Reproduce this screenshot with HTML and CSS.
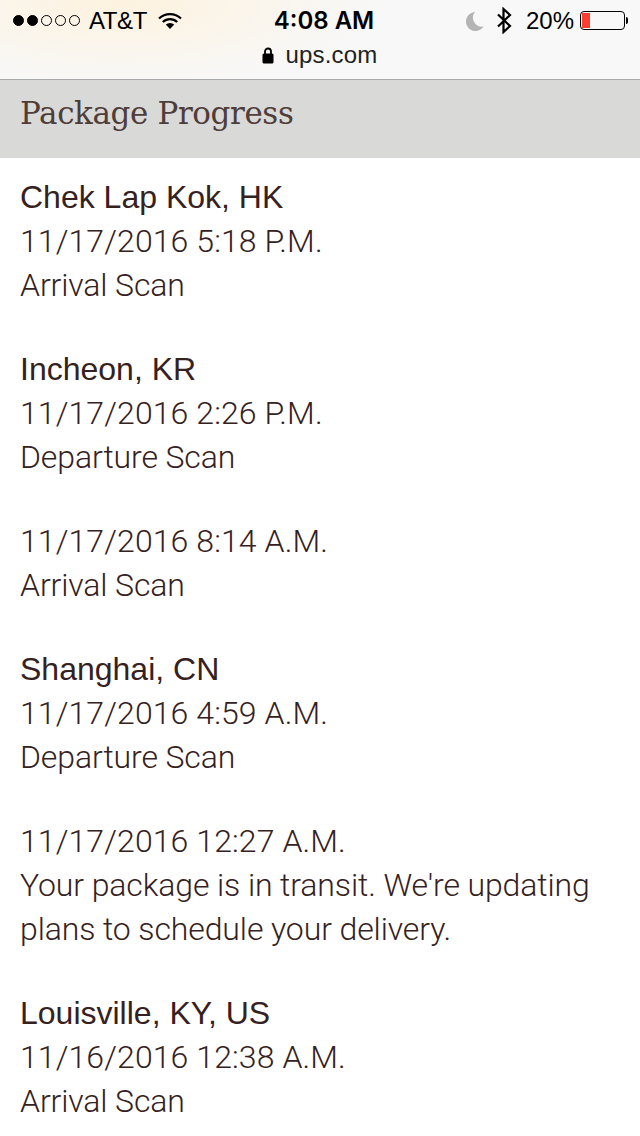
FILE: index.html
```html
<!DOCTYPE html>
<html lang="en">
<head>
    <meta charset="UTF-8">
    <meta name="viewport" content="width=device-width, initial-scale=1.0">
    <title>Package Progress</title>
    <link rel="stylesheet" href="styles.css">
</head>
<body>
<div class="browser-bar">
    <div class="status-row">
        <div class="status-left">
            <span class="signal">
                <i class="dot on"></i><i class="dot on"></i><i class="dot"></i><i class="dot"></i><i class="dot"></i>
            </span>
            <span class="carrier">AT&amp;T</span>
            <svg class="wifi" width="24" height="18" viewBox="0 0 24 18">
                <path d="M1 6.5a16 16 0 0 1 22 0" fill="none" stroke="#000" stroke-width="2.2"/>
                <path d="M4.800 10a10.500 10.500 0 0 1 14.400 0" fill="none" stroke="#000" stroke-width="2.200"/>
                <path d="M7.800 12.600a6 6 0 0 1 8.400 0L12 17z" fill="#000"/>
            </svg>
        </div>
        <div class="clock">4:08 AM</div>
        <div class="status-right">
            <svg class="moon" width="19" height="20" viewBox="0 0 19 20">
                <path d="M10 1a9.500 9.500 0 1 0 8.500 14.500A9 9 0 0 1 10 1z" fill="#b4b4b4"/>
            </svg>
            <svg class="bluetooth" width="16" height="27" viewBox="0 0 16 27">
                <path d="M2 7.500 14 19l-6.500 6V2L14 8 2 19.500" fill="none" stroke="#000" stroke-width="2.200"/>
            </svg>
            <span class="percent">20%</span>
            <span class="battery"><span class="battery-level"></span></span>
            <span class="battery-tip"></span>
        </div>
    </div>
    <div class="url-row">
        <svg class="lock" width="12" height="17" viewBox="0 0 12 17">
            <path d="M3 7V4.500a3 3 0 0 1 6 0V7" fill="none" stroke="#000" stroke-width="1.800"/>
            <rect x="0.500" y="6.500" width="11" height="10" rx="1.500" fill="#000"/>
        </svg>
        <span class="url">ups.com</span>
    </div>
</div>

<h1 class="section-title">Package Progress</h1>

<div class="progress-list">
    <div class="scan">
        <div class="place">Chek Lap Kok, HK</div>
        <div class="date">11/17/2016 5:18 P.M.</div>
        <div class="note">Arrival Scan</div>
    </div>
    <div class="scan">
        <div class="place">Incheon, KR</div>
        <div class="date">11/17/2016 2:26 P.M.</div>
        <div class="note">Departure Scan</div>
    </div>
    <div class="scan">
        <div class="date">11/17/2016 8:14 A.M.</div>
        <div class="note">Arrival Scan</div>
    </div>
    <div class="scan">
        <div class="place">Shanghai, CN</div>
        <div class="date">11/17/2016 4:59 A.M.</div>
        <div class="note">Departure Scan</div>
    </div>
    <div class="scan">
        <div class="date">11/17/2016 12:27 A.M.</div>
        <div class="note">Your package is in transit. We're updating<br>plans to schedule your delivery.</div>
    </div>
    <div class="scan">
        <div class="place">Louisville, KY, US</div>
        <div class="date">11/16/2016 12:38 A.M.</div>
        <div class="note">Arrival Scan</div>
    </div>
</div>
</body>
</html>
```

FILE: styles.css
```css
html, body {
    margin: 0;
    height: 1136px;
    overflow: hidden;
}
body {
    font-family: Roboto, "Liberation Sans", sans-serif;
    font-weight: 300;
    background-color: #fff;
    color: #35211d;
}
.browser-bar {
    height: 79px;
    border-bottom: 1px solid #a9a9a9;
    background-color: #f8f8f8;
    background-image: radial-gradient(ellipse 260px 80px at 120px 5px, #fdf2df, #f8f8f8);
    color: #000;
    font-family: "Liberation Sans", sans-serif;
    font-weight: 400;
}
.status-row {
    height: 41px;
    display: flex;
    align-items: center;
    justify-content: space-between;
    padding: 0 12px 0 13px;
}
.status-left, .status-right {
    display: flex;
    align-items: center;
}
.status-left {
    width: 232px;
}
.status-right {
    width: 225px;
    justify-content: flex-end;
}
.signal {
    display: flex;
    gap: 3px;
}
.dot {
    width: 11px;
    height: 11px;
    box-sizing: border-box;
    border: 1px solid #000;
    border-radius: 50%;
}
.dot.on {
    background-color: #000;
}
.carrier, .percent {
    font-size: 24px;
}
.carrier {
    margin-left: 9px;
    letter-spacing: -0.4px;
}
.wifi {
    margin-left: 11px;
}
.clock {
    font-family: Inter, sans-serif;
    font-size: 24px;
    font-weight: 600;
}
.moon {
    margin-right: 12px;
}
.bluetooth {
    margin-right: 14px;
}
.percent {
    margin-right: 6px;
}
.battery {
    width: 45px;
    height: 19px;
    box-sizing: border-box;
    border: 1px solid #000;
    border-radius: 4px;
    padding: 1px;
    display: flex;
}
.battery-level {
    width: 8px;
    background-color: #fc3d30;
}
.battery-tip {
    width: 2px;
    height: 7px;
    margin-left: 1px;
    background-color: #000;
    border-radius: 0 2px 2px 0;
}
.url-row {
    display: flex;
    align-items: center;
    justify-content: center;
    gap: 11px;
    height: 28px;
}
.url {
    font-size: 24px;
    letter-spacing: 0.2px;
    color: #222;
}
.section-title {
    margin: 0;
    height: 78px;
    padding: 0 20px;
    background-color: #d9d9d7;
    font-family: "DejaVu Serif", serif;
    font-size: 31px;
    font-weight: 400;
    letter-spacing: -0.4px;
    line-height: 66px;
    color: #4f3d39;
}
.progress-list {
    padding: 17px 20px 0;
    font-size: 32px;
    line-height: 44px;
}
.scan {
    margin-bottom: 40px;
}
.place {
    font-family: "Liberation Sans", sans-serif;
    font-weight: 400;
}
.date {
    letter-spacing: 0.1px;
}
.note {
    letter-spacing: -0.12px;
}
```
